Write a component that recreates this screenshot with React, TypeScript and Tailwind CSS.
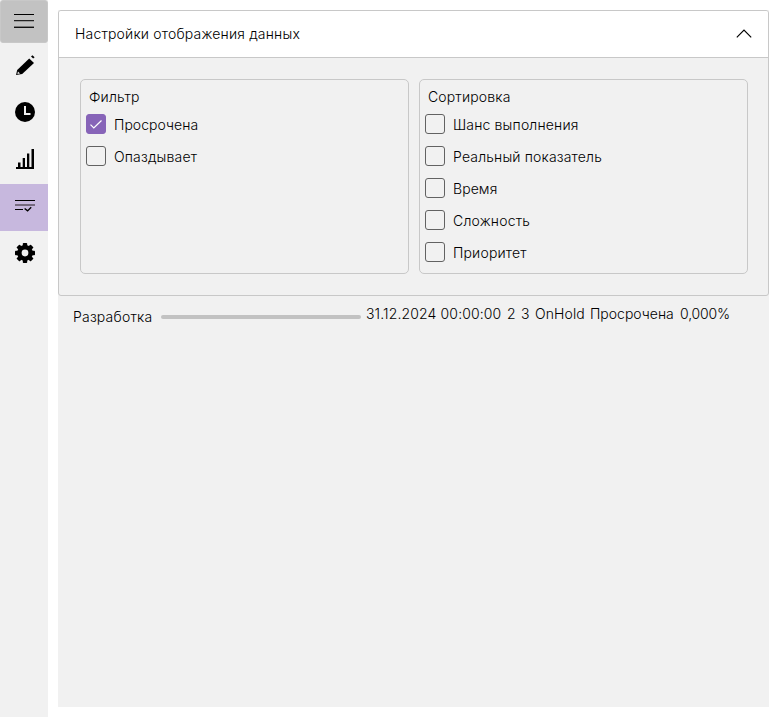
import React from "react";

function MenuIcon() {
  return (
    <svg width="20" height="14" viewBox="0 0 20 14" shapeRendering="crispEdges">
      <rect width="20" height="1" fill="#000" />
      <rect y="6" width="20" height="1" fill="#222" />
      <rect y="7" width="20" height="1" fill="#999" />
      <rect y="12" width="20" height="1" fill="#777" />
      <rect y="13" width="20" height="1" fill="#111" />
    </svg>
  );
}

function PencilIcon() {
  return (
    <svg width="20" height="20" viewBox="0 0 20 20">
      <path d="M14.2 3.4 19 8 7.2 19 1 19.9 2.2 14.9Z" fill="#000" />
      <path d="M16 1.6 17.4.2 19.6 2.2 18.2 3.6Z" fill="#000" />
      <path d="M2.9 16.6 5 18.4 2.4 18.9Z" fill="#f1f1f1" />
    </svg>
  );
}

function ClockIcon() {
  return (
    <svg width="20" height="20" viewBox="0 0 20 20">
      <circle cx="10" cy="10" r="10" fill="#000" />
      <path d="M10 4V12H15.5" fill="none" stroke="#f1f1f1" strokeWidth="2" />
    </svg>
  );
}

function BarsIcon() {
  return (
    <svg width="18" height="20" viewBox="0 0 18 20">
      <path d="M0 18H18V20H0ZM2 13.5H4.5V18H2ZM6.7 9H9V18H6.7ZM11 4.5H13.3V18H11ZM15.5 0H18V18H15.5Z" fill="#000" />
    </svg>
  );
}

function ListCheckIcon() {
  return (
    <svg width="20" height="12" viewBox="0 0 20 12">
      <rect width="20" height="1" fill="#000" />
      <rect y="4" width="20" height="2" fill="#75697f" />
      <rect y="9" width="8" height="1" fill="#000" />
      <path d="m9.6 8.5 3 2.4 3.6-3.6" fill="none" stroke="#000" strokeWidth="1.4" />
    </svg>
  );
}

function GearIcon() {
  return (
    <svg width="20" height="20" viewBox="0 0 20 20">
      <g fill="#000">
        <rect x="7.8" y="0" width="4.4" height="20" rx=".8" />
        <rect x="7.8" y="0" width="4.4" height="20" rx=".8" transform="rotate(45 10 10)" />
        <rect x="7.8" y="0" width="4.4" height="20" rx=".8" transform="rotate(90 10 10)" />
        <rect x="7.8" y="0" width="4.4" height="20" rx=".8" transform="rotate(135 10 10)" />
        <circle cx="10" cy="10" r="7.9" />
      </g>
      <circle cx="10" cy="10" r="3.4" fill="#f1f1f1" />
    </svg>
  );
}

function NavItem({ children, active = false }: { children: React.ReactNode; active?: boolean }) {
  return (
    <button className={`flex h-[47px] w-12 items-center justify-center pb-[3px] pl-0.5 ${active ? "bg-[#c7b8de]" : ""}`}>
      {children}
    </button>
  );
}

type OptionProps = { label: string; checked?: boolean; tracking?: string };

function Option({ label, checked = false, tracking = "tracking-[0.16px]" }: OptionProps) {
  return (
    <label className="flex h-8 items-center">
      <span
        className={`flex size-5 items-center justify-center rounded-[3px] border ${
          checked ? "border-[#8764b8] bg-[#8764b8]" : "border-[#626262]"
        }`}
      >
        {checked && (
          <svg width="12" height="9" viewBox="0 0 12 9" fill="none" stroke="#fff" strokeWidth="1.2">
            <path d="m.5 4.7 3.3 3.3L11.5.5" />
          </svg>
        )}
      </span>
      <span className={`ml-2 pt-0.5 ${tracking}`}>{label}</span>
    </label>
  );
}

function Group({ title, children }: { title: string; children: React.ReactNode }) {
  return (
    <section className="h-[195px] w-[329px] rounded-[5px] border border-[#c8c8c8] pl-[5px] pt-[7px]">
      <h2 className="h-[21px] pl-[3px] leading-[19px] tracking-[0.15px]">{title}</h2>
      {children}
    </section>
  );
}

export default function App() {
  return (
    <div className="flex h-[717px] w-[779px] bg-white font-['Inter',sans-serif] text-[14px] leading-5 font-light text-black">
      <nav className="flex w-12 flex-col bg-[#f1f1f1]">
        <button className="flex h-[43px] items-center justify-center rounded-[3px] border border-[#c8c8c8] bg-[#c2c2c2] pb-px">
          <MenuIcon />
        </button>
        <NavItem><PencilIcon /></NavItem>
        <NavItem><ClockIcon /></NavItem>
        <NavItem><BarsIcon /></NavItem>
        <NavItem active><ListCheckIcon /></NavItem>
        <NavItem><GearIcon /></NavItem>
      </nav>
      <main className="ml-2.5 mt-2.5 h-[697px] w-[711px] bg-[#f1f1f1]">
        <div className="h-[286px] rounded-[3px] border border-[#c8c8c8]">
          <header className="flex h-[47px] items-center justify-between rounded-t-[2px] border-b border-[#c8c8c8] bg-white pl-4 pr-4">
            <h1 className="tracking-[0.18px]">Настройки отображения данных</h1>
            <svg width="16" height="10" viewBox="0 0 16 10" fill="none" stroke="#000" strokeWidth="1.2">
              <path d="M.8 8.3 8 1.1l7.2 7.2" />
            </svg>
          </header>
          <div className="flex gap-2.5 pl-[21px] pt-[21px]">
            <Group title="Фильтр">
              <Option label="Просрочена" checked tracking="tracking-[0.04px]" />
              <Option label="Опаздывает" />
            </Group>
            <Group title="Сортировка">
              <Option label="Шанс выполнения" />
              <Option label="Реальный показатель" />
              <Option label="Время" tracking="tracking-[0.08px]" />
              <Option label="Сложность" tracking="tracking-[0.2px]" />
              <Option label="Приоритет" />
            </Group>
          </div>
        </div>
        <div className="flex items-start whitespace-nowrap pl-[15px] pt-2">
          <span className="w-[88px] pt-[3px] tracking-[0.2px]">Разработка</span>
          <span className="mt-[11px] h-1 w-[200px] rounded-full bg-[#c2c2c2]" />
          <span className="ml-[5px] w-[141px] tracking-[0.13px]">31.12.2024 00:00:00</span>
          <span className="w-[14px]">2</span>
          <span className="w-[14px]">3</span>
          <span className="w-[55px] tracking-[0.1px]">OnHold</span>
          <span className="w-[90px]">Просрочена</span>
          <span className="tracking-[-0.15px]">0,000%</span>
        </div>
      </main>
    </div>
  );
}
